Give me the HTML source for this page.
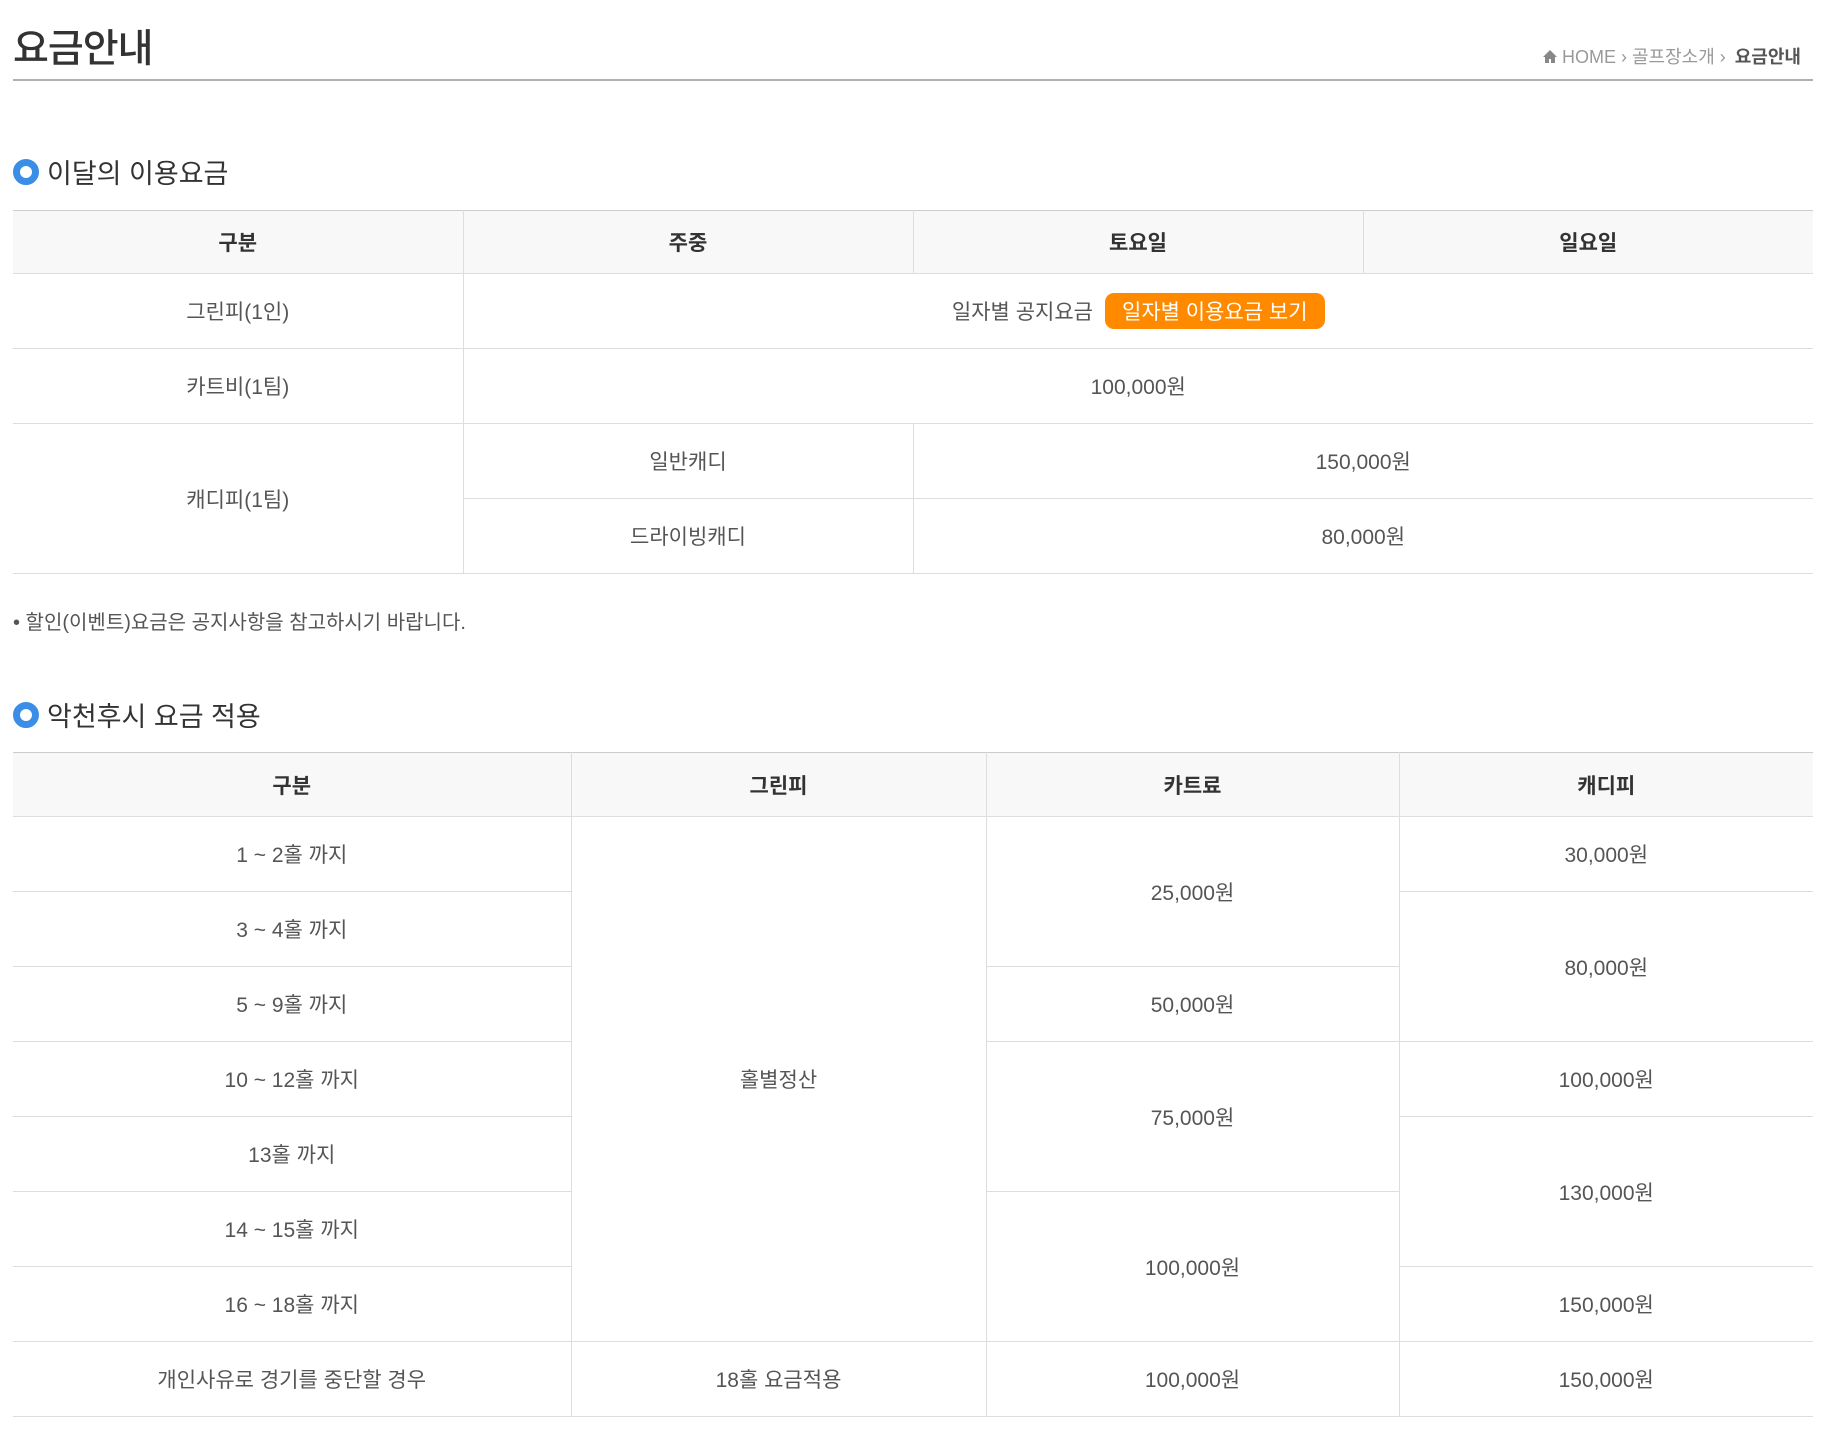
<!DOCTYPE html>
<html><head><meta charset="utf-8"><style>
*{margin:0;padding:0;box-sizing:border-box}
body{width:1831px;height:1429px;background:#fff;font-family:"Liberation Sans","Noto Sans CJK KR",sans-serif;color:#555;position:relative;overflow:hidden}
.title{position:absolute;left:13px;top:18px;font-size:39px;color:#333;font-weight:500;letter-spacing:-1px}
.bc{position:absolute;right:30px;top:43px;font-size:18px;color:#999;display:flex;align-items:center;gap:4px}
.bc b{color:#555}
.hline{position:absolute;left:13px;top:79px;width:1800px;height:2px;background:#b0b0b0}
.h2{position:absolute;left:13px;font-size:27px;color:#333;display:flex;align-items:center}
.h2 i{display:inline-block;width:26px;height:26px;border-radius:50%;border:7px solid #3a8ee6;margin-right:8px;background:#fff}
table{position:absolute;left:13px;width:1800px;border-collapse:collapse;table-layout:fixed;font-size:21px}
th{background:#f8f8f8;color:#333;font-weight:bold;border:1px solid #ddd;border-top:1px solid #ccc;border-left:none;font-size:21px}
th:last-child,td:last-child{border-right:none}
td{border:1px solid #ddd;text-align:center;color:#555}
td.first{border-left:none}
.btn{display:inline-block;background:#ff8a00;color:#fff;border-radius:9px;padding:3px 17px;margin-left:12px;font-size:21px}
.note{position:absolute;left:13px;top:606px;font-size:20px;color:#555}
</style></head><body>
<div class="title">요금안내</div>
<div class="bc"><svg width="16" height="15" viewBox="0 0 16 15"><path d="M8 1L1 8h2v6h4v-4h2v4h4V8h2z" fill="#888"/></svg> HOME ›&nbsp;골프장소개 ›&nbsp;<b>요금안내</b></div>
<div class="hline"></div>
<div class="h2" style="top:152px"><i></i>이달의 이용요금</div>
<table style="top:210px">
<colgroup><col style="width:450px"><col style="width:450px"><col style="width:450px"><col style="width:450px"></colgroup>
<tr style="height:63px"><th>구분</th><th>주중</th><th>토요일</th><th>일요일</th></tr>
<tr style="height:75px"><td class="first">그린피(1인)</td><td colspan="3">일자별 공지요금<span class="btn">일자별 이용요금 보기</span></td></tr>
<tr style="height:75px"><td class="first">카트비(1팀)</td><td colspan="3">100,000원</td></tr>
<tr style="height:75px"><td class="first" rowspan="2">캐디피(1팀)</td><td>일반캐디</td><td colspan="2">150,000원</td></tr>
<tr style="height:75px"><td>드라이빙캐디</td><td colspan="2">80,000원</td></tr>
</table>
<div class="note">• 할인(이벤트)요금은 공지사항을 참고하시기 바랍니다.</div>
<div class="h2" style="top:695px"><i></i>악천후시 요금 적용</div>
<table style="top:752px">
<colgroup><col style="width:558px"><col style="width:415px"><col style="width:413px"><col style="width:414px"></colgroup>
<tr style="height:64px"><th>구분</th><th>그린피</th><th>카트료</th><th>캐디피</th></tr>
<tr style="height:75px"><td class="first">1 ~ 2홀 까지</td><td rowspan="7">홀별정산</td><td rowspan="2">25,000원</td><td>30,000원</td></tr>
<tr style="height:75px"><td class="first">3 ~ 4홀 까지</td><td rowspan="2">80,000원</td></tr>
<tr style="height:75px"><td class="first">5 ~ 9홀 까지</td><td>50,000원</td></tr>
<tr style="height:75px"><td class="first">10 ~ 12홀 까지</td><td rowspan="2">75,000원</td><td>100,000원</td></tr>
<tr style="height:75px"><td class="first">13홀 까지</td><td rowspan="2">130,000원</td></tr>
<tr style="height:75px"><td class="first">14 ~ 15홀 까지</td><td rowspan="2">100,000원</td></tr>
<tr style="height:75px"><td class="first">16 ~ 18홀 까지</td><td>150,000원</td></tr>
<tr style="height:75px"><td class="first">개인사유로 경기를 중단할 경우</td><td>18홀 요금적용</td><td>100,000원</td><td>150,000원</td></tr>
</table>
</body></html>
